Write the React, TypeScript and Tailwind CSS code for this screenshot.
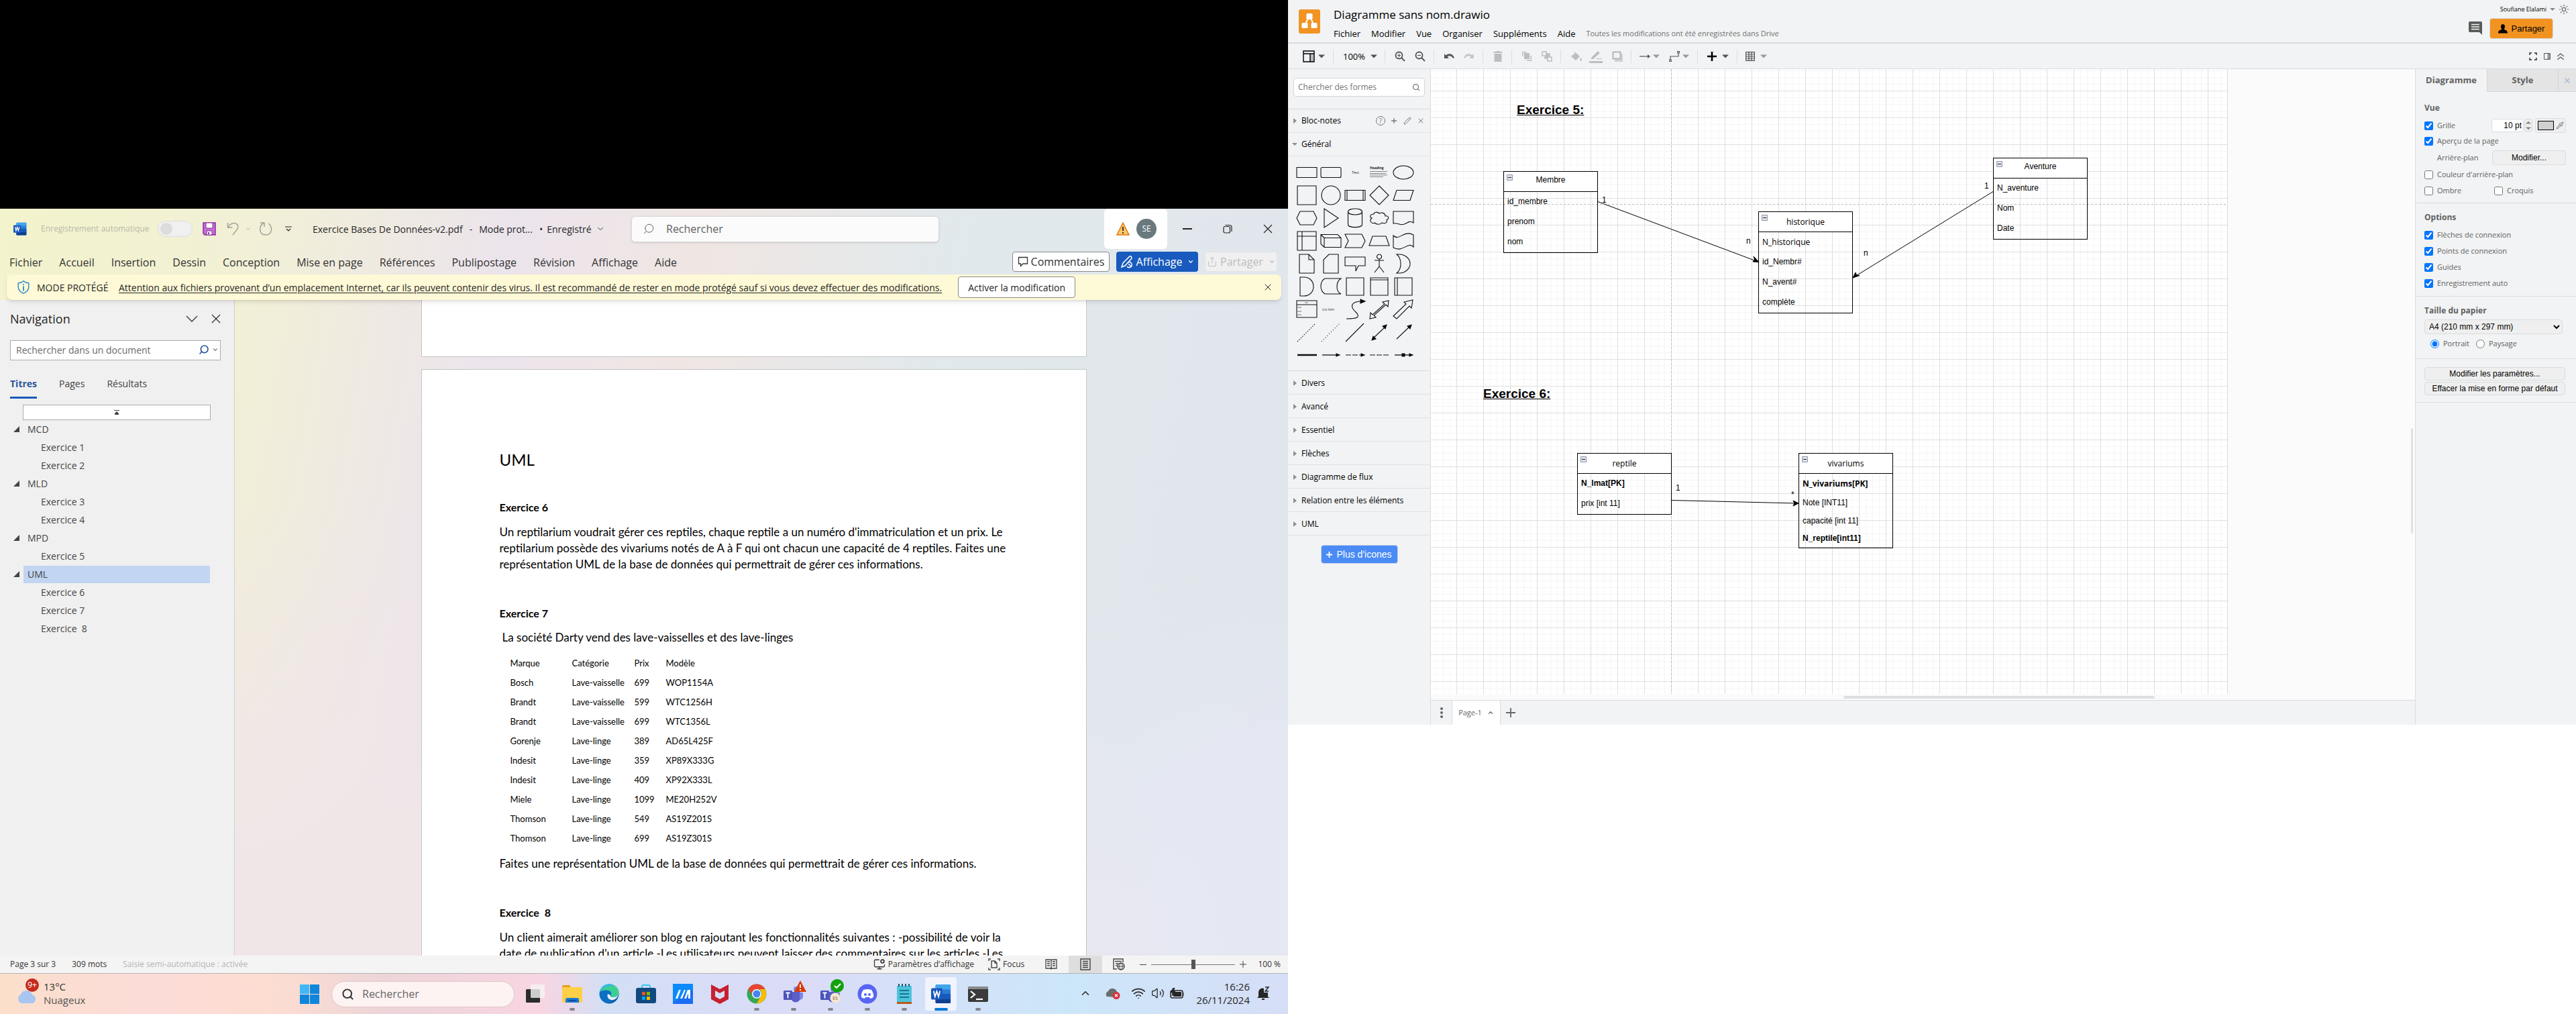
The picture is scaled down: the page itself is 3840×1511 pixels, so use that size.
import React from "react";
import type { ReactNode } from "react";
import {
  ChevronDown,
  ChevronUp,
  MonitorCog,
  Pencil,
  Pipette,
  Search,
  Share,
  Sun,
  Volume2,
  Wifi,
  X,
} from "lucide-react";

/* ------------------------------------------------------------------ */
/* Word                                                                */
/* ------------------------------------------------------------------ */

const wordTabs = [
  "Fichier",
  "Accueil",
  "Insertion",
  "Dessin",
  "Conception",
  "Mise en page",
  "Références",
  "Publipostage",
  "Révision",
  "Affichage",
  "Aide",
];

function WordLogo({ className }: { className: string }) {
  return (
    <svg viewBox="0 0 32 32" className={className} aria-hidden="true">
      <rect x="7" y="1" width="24" height="30" rx="2" fill="#2b7cd3" />
      <path d="M9 1h20a2 2 0 0 1 2 2v6H7V3a2 2 0 0 1 2-2z" fill="#41a5ee" />
      <path d="M7 16h24v8H7z" fill="#185abd" />
      <path d="M7 24h24v5a2 2 0 0 1-2 2H9a2 2 0 0 1-2-2z" fill="#103f91" />
      <rect x="0" y="7" width="18" height="18" rx="2" fill="#185abd" />
      <path d="M4 11.500l2.200 9 2.800-8.500 2.800 8.500 2.200-9" fill="none" stroke="#fff" strokeWidth="2" />
    </svg>
  );
}

function TitleBar() {
  return (
    <header className="flex h-[60px] shrink-0 items-center pl-5 text-[#262626]">
      <div className="flex flex-1 items-center">
        <WordLogo className="h-5 w-5" />
        <span className="ml-[21px] w-[174px] text-[12px] text-[#b9b9a8]">Enregistrement automatique</span>
        <button type="button" role="switch" aria-checked="false" aria-label="Enregistrement automatique" className="flex h-6 w-[52px] items-center rounded-full border border-[#dedede] bg-[#f0f0f0] pl-[3px]">
          <span className="h-[18px] w-[18px] rounded-full bg-[#dcdcdc]" />
        </button>
        <button type="button" aria-label="Enregistrer" className="ml-[15px]">
          <svg viewBox="0 0 20 20" className="h-5 w-5">
            <path d="M1 1h18v18H3l-2-2z" fill="#c56fd0" stroke="#8a2da5" strokeWidth="1.500" />
            <path d="M5 1h10v8H5z M6 13h8v6H6z" fill="#fff" stroke="#8a2da5" />
            <path d="M8 15h2v3H8z" fill="#8a2da5" />
          </svg>
        </button>
        <button type="button" aria-label="Annuler" className="ml-4">
          <svg viewBox="0 0 20 20" className="h-5 w-5" fill="none" stroke="#a3a299" strokeWidth="1.500">
            <path d="M1.500 1v7h7 M2 7.500C6 1 13 0 16 4c3 4-1 7-7 15" />
          </svg>
        </button>
        <ChevronDown className="ml-[7px] h-2.5 w-2.5 text-[#a3a299]" />
        <button type="button" aria-label="Rétablir" className="ml-[11px]">
          <svg viewBox="0 0 20 20" className="h-5 w-5" fill="none" stroke="#a3a299" strokeWidth="1.500">
            <path d="M2 1h6v6 M7 1.500C-1 6 0 19 10 19S21 7 14 2" />
          </svg>
        </button>
        <button type="button" aria-label="Personnaliser" className="ml-[19px]">
          <svg viewBox="0 0 10 10" className="h-2.5 w-2.5" fill="none" stroke="#262626" strokeWidth="1.200">
            <path d="M0 2h10 M2 5l3 3 3-3" />
          </svg>
        </button>
        <div className="ml-[31px] flex w-[434px] items-center gap-2.5 text-[14px] whitespace-nowrap">
          <span>Exercice Bases De Données-v2.pdf</span>
          <span>-</span>
          <span>Mode prot...</span>
          <span className="flex items-center gap-1.5">
            <span>•</span>
            <span>Enregistré</span>
            <ChevronDown className="h-3.5 w-3.5" strokeWidth={1.500} />
          </span>
        </div>
      </div>
      <label className="mr-[246px] ml-[19px] flex h-[39px] w-[459px] items-center gap-[17px] rounded-md border border-[#d8d8d8] bg-[#fbfbfb] pl-4 shadow-sm">
        <Search className="h-[18px] w-[18px] -scale-x-100 text-[#616161]" strokeWidth={1.300} />
        <input aria-label="Rechercher" placeholder="Rechercher" className="w-[380px] bg-transparent text-[16px] outline-none placeholder:text-[#616161]" />
      </label>
      <div className="flex h-[60px] w-[94px] items-center gap-2.5 rounded-md bg-white pl-[18px]">
        <svg viewBox="0 0 20 20" className="h-5 w-5">
          <path d="M10 1l9 18H1z" fill="#fbc765" stroke="#e2791c" strokeWidth="1.500" />
          <path d="M10 7v6M10 15v2" stroke="#262626" strokeWidth="1.800" />
        </svg>
        <span className="flex h-[30px] w-[30px] items-center justify-center rounded-full bg-[#69797e] text-[12px] text-white">SE</span>
      </div>
      <div className="flex items-center gap-[46px] pr-[23px] pl-[23px]">
        <button type="button" aria-label="Réduire" className="h-0.5 w-3.5 bg-[#262626]" />
        <button type="button" aria-label="Restaurer">
          <svg viewBox="0 0 14 14" className="h-3.5 w-3.5" fill="none" stroke="#262626" strokeWidth="1.200">
            <rect x="1" y="3.500" width="9.500" height="9.500" rx="2" />
            <path d="M3.500 1.500H10a3 3 0 0 1 3 3V11" />
          </svg>
        </button>
        <button type="button" aria-label="Fermer">
          <svg viewBox="0 0 14 14" className="h-3.5 w-3.5" stroke="#262626" strokeWidth="1.200">
            <path d="M1 1l12 12M13 1L1 13" />
          </svg>
        </button>
      </div>
    </header>
  );
}

function Ribbon() {
  return (
    <div className="flex h-[38px] shrink-0 items-center justify-between pr-4 pl-3.5 text-[16px] text-[#333]">
      <nav className="flex gap-[25px] pt-0.5">
        {wordTabs.map((tab) => (
          <button type="button" key={tab}>{tab}</button>
        ))}
      </nav>
      <div className="flex gap-2.5">
        <button type="button" className="flex h-[30px] w-[145px] items-center justify-center gap-1 rounded border border-[#8a8a8a] bg-white">
          <svg viewBox="0 0 16 16" className="h-4 w-4" fill="none" stroke="#333" strokeWidth="1.300">
            <path d="M1.500 1.500h13v9.500H8L4.500 14.500V11h-3z" />
          </svg>
          Commentaires
        </button>
        <button type="button" className="flex h-[30px] w-[122px] items-center justify-center gap-1 rounded bg-[#185abd] text-white">
          <svg viewBox="0 0 20 20" className="h-5 w-5" fill="none" stroke="#fff" strokeWidth="1.500">
            <path d="M2 18l2-6L14 2q3-1 3 3L7 16z M11 11a4 4 0 1 1-1 6M12 13l5 5" />
          </svg>
          Affichage
          <ChevronDown className="ml-1 h-2.5 w-2.5" strokeWidth={3} />
        </button>
        <button type="button" disabled className="flex h-[30px] w-[108px] items-center justify-center gap-1 rounded border border-[#e4e4e4] bg-[#f0f0f0] text-[#bdbdbd]">
          <Share className="h-4 w-4" strokeWidth={1.500} />
          Partager
          <ChevronDown className="ml-1 h-2.5 w-2.5" strokeWidth={3} />
        </button>
      </div>
    </div>
  );
}

function ProtectedBar() {
  return (
    <div className="z-10 mx-2.5 flex h-[38px] shrink-0 items-center rounded-lg bg-[#fef9d6] pl-[15px] text-[14px] text-[#262626] shadow-md">
      <svg viewBox="0 0 20 22" className="h-5 w-5" fill="none" stroke="#2e8bcb" strokeWidth="1.600">
        <path d="M10 1c3 2.500 5 3 8.500 3v7c0 5-4 8-8.500 10-4.500-2-8.500-5-8.500-10V4C5 4 7 3.500 10 1z" />
        <path d="M10 9v8M10 5.500v2" strokeWidth="2" />
      </svg>
      <span className="ml-2.5 w-[122px] whitespace-nowrap">MODE PROTÉGÉ</span>
      <a href="#infos" className="whitespace-nowrap underline underline-offset-2">
        Attention aux fichiers provenant d’un emplacement Internet, car ils peuvent contenir des virus. Il est recommandé de rester en mode protégé sauf si vous devez effectuer des modifications.
      </a>
      <button type="button" className="ml-6 h-8 w-[175px] rounded border border-[#8a8a8a] bg-white">Activer la modification</button>
      <button type="button" aria-label="Fermer" className="mr-3 ml-auto">
        <X className="h-4 w-4" strokeWidth={1.500} />
      </button>
    </div>
  );
}

const outline = [
  { title: "MCD", items: ["Exercice 1", "Exercice 2"] },
  { title: "MLD", items: ["Exercice 3", "Exercice 4"] },
  { title: "MPD", items: ["Exercice 5"] },
  { title: "UML", items: ["Exercice 6", "Exercice 7", "Exercice  8"], active: true },
];

function NavigationPane() {
  return (
    <aside className="w-[350px] shrink-0 border-r border-[#d0d0d0] bg-[#f0f0f0] text-[14px] text-[#444]">
      <div className="flex h-14 items-center pr-5 pl-[15px]">
        <h2 className="flex-1 text-[18px] text-[#262626]">Navigation</h2>
        <button type="button" aria-label="Options du volet" className="mr-5">
          <svg viewBox="0 0 18 10" className="h-2.5 w-[18px]" fill="none" stroke="#333" strokeWidth="1.300"><path d="M1 1l8 8 8-8" /></svg>
        </button>
        <button type="button" aria-label="Fermer le volet">
          <svg viewBox="0 0 14 14" className="h-3.5 w-3.5" stroke="#333" strokeWidth="1.300"><path d="M1 1l12 12M13 1L1 13" /></svg>
        </button>
      </div>
      <div className="mt-1 mr-5 ml-[15px] flex h-[30px] items-center border border-[#ababab] bg-white pr-0.5 pb-0.5 pl-2">
        <input aria-label="Rechercher dans un document" placeholder="Rechercher dans un document" className="min-w-0 flex-1 outline-none placeholder:text-[#6a6a6a]" />
        <Search className="h-4 w-4 -scale-x-100 text-[#2b579a]" strokeWidth={2.500} />
        <ChevronDown className="ml-1 h-2.5 w-2.5" strokeWidth={2.500} />
      </div>
      <div className="mt-[19px] flex h-[38px] items-stretch gap-[33px] pl-[15px]">
        <button type="button" className="border-b-[3px] border-[#185abd] pb-1 font-bold text-[#2b579a]">Titres</button>
        <button type="button" className="border-b-[3px] border-transparent pb-1">Pages</button>
        <button type="button" className="border-b-[3px] border-transparent pb-1">Résultats</button>
      </div>
      <button type="button" aria-label="Aller au début" className="mt-[9px] ml-[34px] flex h-[23px] w-[280px] items-center justify-center border border-[#ababab] bg-white">
        <svg viewBox="0 0 8 7" className="h-[7px] w-2" fill="#444"><path d="M0 0h8v1H0z M4 2l3 3v2H1V5z" /></svg>
      </button>
      <ul className="mr-9 pl-5">
        {outline.map((group) => (
          <li key={group.title}>
            <div className="flex h-[27px] items-center gap-1.5">
              <svg viewBox="0 0 9 9" className="h-[9px] w-[9px]" fill="#444"><path d="M9 0v9H0z" /></svg>
              <span className={group.active ? "flex h-[26px] flex-1 items-center bg-[#c2d5f2] pl-1.5" : "flex-1 pl-1.5"}>{group.title}</span>
            </div>
            <ul>
              {group.items.map((item) => (
                <li key={item} className="flex h-[27px] items-center pl-[41px] whitespace-pre">{item}</li>
              ))}
            </ul>
          </li>
        ))}
      </ul>
    </aside>
  );
}

const machines = [
  ["Bosch", "Lave-vaisselle", "699", "WOP1154A"],
  ["Brandt", "Lave-vaisselle", "599", "WTC1256H"],
  ["Brandt", "Lave-vaisselle", "699", "WTC1356L"],
  ["Gorenje", "Lave-linge", "389", "AD65L425F"],
  ["Indesit", "Lave-linge", "359", "XP89X333G"],
  ["Indesit", "Lave-linge", "409", "XP92X333L"],
  ["Miele", "Lave-linge", "1099", "ME20H252V"],
  ["Thomson", "Lave-linge", "549", "AS19Z201S"],
  ["Thomson", "Lave-linge", "699", "AS19Z301S"],
];

function DocumentPages() {
  return (
    <main className="flex min-w-0 flex-1 flex-col items-center overflow-hidden bg-[radial-gradient(ellipse_80%_75%_at_15%_105%,#f0e6e8_30%,transparent_100%),radial-gradient(ellipse_40%_60%_at_100%_100%,#e5e8f3_30%,transparent_100%)] pr-[23px]">
      <div className="h-[85px] w-[992px] shrink-0 border border-t-0 border-[#c6c6c6] bg-white" />
      <article className="mt-[18px] w-[992px] shrink-0 border border-[#c6c6c6] bg-white px-[116px] pb-24 font-[Lato,sans-serif] text-[17px] leading-6 whitespace-nowrap text-black">
        <h1 className="mt-[116px] text-[24px] leading-9">UML</h1>
        <h2 className="mt-[41px] text-[16px] leading-6 font-bold">Exercice 6</h2>
        <p className="mt-[13px]">
          Un reptilarium voudrait gérer ces reptiles, chaque reptile a un numéro d'immatriculation et un prix. Le
          <br />
          reptilarium possède des vivariums notés de A à F qui ont chacun une capacité de 4 reptiles. Faites une
          <br />
          représentation UML de la base de données qui permettrait de gérer ces informations.
        </p>
        <h2 className="mt-[49px] text-[16px] leading-6 font-bold">Exercice 7</h2>
        <p className="mt-3 pl-1">La société Darty vend des lave-vaisselles et des lave-linges</p>
        <table className="mt-[11px] ml-4 text-left text-[13px]">
          <thead>
            <tr className="h-[29px]">
              <th className="w-[92px] font-normal">Marque</th>
              <th className="w-[93px] font-normal">Catégorie</th>
              <th className="w-[47px] font-normal">Prix</th>
              <th className="w-[90px] font-normal">Modèle</th>
            </tr>
          </thead>
          <tbody>
            {machines.map((row) => (
              <tr key={row[3]} className="h-[29px]">
                {row.map((cell) => (
                  <td key={cell}>{cell}</td>
                ))}
              </tr>
            ))}
          </tbody>
        </table>
        <p className="mt-3">Faites une représentation UML de la base de données qui permettrait de gérer ces informations.</p>
        <h2 className="mt-[49px] text-[16px] leading-6 font-bold whitespace-pre">Exercice  8</h2>
        <p className="mt-[13px]">
          Un client aimerait améliorer son blog en rajoutant les fonctionnalités suivantes : -possibilité de voir la
          <br />
          date de publication d'un article -Les utilisateurs peuvent laisser des commentaires sur les articles -Les
        </p>
      </article>
    </main>
  );
}

function StatusBar() {
  return (
    <footer className="flex h-[27px] shrink-0 items-center border-b border-[#b4b4b4] bg-[#f4f4f4] pr-[11px] pl-[15px] text-[12px] text-[#333]">
      <span>Page 3 sur 3</span>
      <span className="ml-6">309 mots</span>
      <span className="ml-6 text-[#b5b5b5]">Saisie semi-automatique : activée</span>
      <button type="button" className="mr-[21px] ml-auto flex items-center gap-1"><MonitorCog className="h-[18px] w-[18px]" strokeWidth={1.700} />Paramètres d’affichage</button>
      <button type="button" className="flex w-[85px] items-center gap-1">
        <svg viewBox="0 0 18 18" className="h-[18px] w-[18px]" fill="none" stroke="#444" strokeWidth="1.400">
          <path d="M1 4V1h3M14 1h3v3M17 14v3h-3M4 17H1v-3 M5 4h5l3 3v7H5z M10 4v3h3" />
        </svg>
        Focus
      </button>
      <button type="button" aria-label="Mode Lecture" className="mr-[17px]">
        <svg viewBox="0 0 18 18" className="h-[18px] w-[18px]" fill="none" stroke="#444" strokeWidth="1.300">
          <path d="M1 2h7l1 1 1-1h7v13h-7l-1 1-1-1H1z M9 3v13M3 5h4M3 8h4M3 11h4M11 5h4M11 8h4M11 11h4" />
        </svg>
      </button>
      <button type="button" aria-label="Page" className="flex h-[26px] w-[50px] items-center justify-center bg-[#dedede]">
        <svg viewBox="0 0 16 18" className="h-[18px] w-4" fill="none" stroke="#444" strokeWidth="1.400">
          <path d="M1 1h14v16H1z M4 4.500h8M4 7.500h8M4 10.500h8M4 13.500h8" />
        </svg>
      </button>
      <button type="button" aria-label="Web" className="mr-[22px] ml-4">
        <svg viewBox="0 0 18 18" className="h-[18px] w-[18px]" fill="none" stroke="#444" strokeWidth="1.400">
          <path d="M6 16H1V1h14v5M3 4.500h10M4 8h4M4 11h2" />
          <circle cx="12" cy="12" r="5" />
          <path d="M7 12h10M12 7c-3 3-3 7 0 10M12 7c3 3 3 7 0 10" strokeWidth="1" />
        </svg>
      </button>
      <button type="button" aria-label="Zoom arrière" className="h-px w-2.5 bg-[#444]" />
      <div className="relative mx-[7px] h-4 w-[125px]">
        <span className="absolute top-2 left-0 h-px w-full bg-[#777]" />
        <input type="range" aria-label="Zoom" defaultValue={50} className="absolute inset-0 h-4 w-full cursor-pointer appearance-none bg-transparent [&::-webkit-slider-thumb]:h-3.5 [&::-webkit-slider-thumb]:w-1.5 [&::-webkit-slider-thumb]:appearance-none [&::-webkit-slider-thumb]:bg-[#555]" />
      </div>
      <button type="button" aria-label="Zoom avant"><svg viewBox="0 0 10 10" className="h-2.5 w-2.5" stroke="#444"><path d="M0 5h10M5 0v10" /></svg></button>
      <span className="w-[51px] text-right whitespace-nowrap">100 %</span>
    </footer>
  );
}

/* ------------------------------------------------------------------ */
/* Windows task bar                                                    */
/* ------------------------------------------------------------------ */

function TeamsGlyph() {
  return (
    <>
      <circle cx="19" cy="8" r="4" fill="#7b83eb" />
      <path d="M12 12h13v9a7 7 0 0 1-13 3z" fill="#5b5fc7" />
      <path d="M24 13h5v6a5 5 0 0 1-5 5z" fill="#7b83eb" />
      <rect x="0" y="10" width="13" height="14" rx="1.500" fill="#4b53bc" />
      <path d="M3.500 13.500h6M6.500 13.500v8" stroke="#fff" strokeWidth="1.800" />
    </>
  );
}

const taskIcons: { name: string; open: boolean; active?: boolean; art: ReactNode }[] = [
  {
    name: "Vue des tâches",
    open: false,
    art: (
      <>
        <rect x="1" y="8" width="21" height="20" rx="1.500" fill="#2b2b2b" />
        <rect x="8" y="1" width="21" height="20" rx="1.500" fill="#f5f5f5" fillOpacity=".8" />
      </>
    ),
  },
  {
    name: "Explorateur",
    open: true,
    art: (
      <>
        <path d="M0 4a2 2 0 0 1 2-2h9l3 4v3H0z" fill="#e8a21a" />
        <rect x="0" y="5" width="30" height="23" rx="1.500" fill="#ffcf48" />
        <path d="M5 28v-4a3 3 0 0 1 3-3h14a3 3 0 0 1 3 3v4z" fill="#1a78d0" />
        <path d="M9 25h12" stroke="#0a3f80" strokeWidth="1.500" />
      </>
    ),
  },
  {
    name: "Edge",
    open: false,
    art: (
      <>
        <circle cx="15" cy="15" r="14.500" fill="#0c6fc4" />
        <path d="M1 12C3 4 9 .5 15 .5 24 .5 30 7 29.500 13c0 5-4 7-8 7-3 0-5-1-4-3 2-3 0-7-4-7-5-1-9 0-12.500 2z" fill="#3ccf8f" />
        <path d="M1 12C3 4 9 .5 15 .5c3 0 6 1 8 3-8-2-16 1-22 8.500z" fill="#35b8e8" />
        <path d="M17 17c-1 2 1 3 4 3 3 0 6-1 7-3 0 3-3 6-7 7-6 1-10-4-8-9z" fill="#e6eefb" />
        <path d="M28 20c-3 6-9 10-15 9 5-1 7-2 9-4z" fill="#0b4f97" />
      </>
    ),
  },
  {
    name: "Store",
    open: false,
    art: (
      <>
        <path d="M9 7V4a2 2 0 0 1 2-2h8a2 2 0 0 1 2 2v3" fill="none" stroke="#3bc4f3" strokeWidth="2" />
        <rect x="0" y="6" width="30" height="23" rx="3" fill="#12497f" />
        <path d="M9 12h5v5H9z" fill="#f25022" />
        <path d="M16 12h5v5h-5z" fill="#7fba00" />
        <path d="M9 19h5v5H9z" fill="#00a4ef" />
        <path d="M16 19h5v5h-5z" fill="#ffb900" />
      </>
    ),
  },
  {
    name: "MyASUS",
    open: false,
    art: (
      <>
        <rect x="0" y="0" width="30" height="30" fill="#1a6ef5" />
        <path d="M0 0h30v8L0 28z" fill="#00a5ff" opacity=".5" />
        <path d="M4 22l5-13h3L7 22z M11 22l6-13h2l-5 13z M17 22l5-13h4v13h-3V14l-3 8z" fill="#fff" />
      </>
    ),
  },
  {
    name: "McAfee",
    open: false,
    art: <path d="M2 1l13 7 13-7v22l-13 7-13-7z M8 10v9l7 4 7-4v-9l-7 4z" fill="#c7202f" fillRule="evenodd" />,
  },
  {
    name: "Chrome",
    open: true,
    art: (
      <>
        <circle cx="15" cy="15" r="14.500" fill="#34a853" />
        <path d="M15 .5A14.500 14.500 0 0 1 27.600 8H15a7 7 0 0 0-6.500 9.500L2.500 7.500A14.500 14.500 0 0 1 15 .5z" fill="#ea4335" />
        <path d="M27.600 8A14.500 14.500 0 0 1 15 29.500l6-11A7 7 0 0 0 19 8z" fill="#fbbc05" />
        <circle cx="15" cy="15" r="7" fill="#fff" />
        <circle cx="15" cy="15" r="5.500" fill="#4285f4" />
      </>
    ),
  },
  {
    name: "Teams",
    open: true,
    art: (
      <>
        <TeamsGlyph />
        <path d="M25-5l9 17H16z" fill="#d83b01" />
        <path d="M25 1v5M25 8v2" stroke="#fff" strokeWidth="2" />
      </>
    ),
  },
  {
    name: "Teams professionnel",
    open: true,
    art: (
      <>
        <TeamsGlyph />
        <circle cx="25" cy="3" r="10" fill="#13a10e" />
        <path d="M21 3l3 3 6-6" fill="none" stroke="#fff" strokeWidth="2" />
        <circle cx="22" cy="21" r="7.500" fill="#f6e8cf" />
        <text x="22" y="23.500" fontSize="7" textAnchor="middle" fill="#6b5a3a">ES</text>
      </>
    ),
  },
  {
    name: "Discord",
    open: true,
    art: (
      <>
        <circle cx="15" cy="15" r="14.500" fill="#5865f2" />
        <path d="M9 9q6-2 12 0 4 6 3 11-3 2-5 2l-1-2h-6l-1 2q-2 0-5-2-1-5 3-11z" fill="#fff" />
        <circle cx="12" cy="16" r="2" fill="#5865f2" />
        <circle cx="18" cy="16" r="2" fill="#5865f2" />
      </>
    ),
  },
  {
    name: "Bloc-notes",
    open: true,
    art: (
      <>
        <rect x="4" y="3" width="22" height="24" rx="1" fill="#4cc3dc" />
        <path d="M4 27h22v3H4z" fill="#b65a1c" />
        <path d="M8 10h14M8 15h14M8 20h14" stroke="#0b5a78" strokeWidth="1.500" />
        <path d="M7 0v4M12 0v4M17 0v4M22 0v4" stroke="#12566d" strokeWidth="2" />
      </>
    ),
  },
  { name: "Word", open: true, active: true, art: null },
  {
    name: "Terminal",
    open: true,
    art: (
      <>
        <rect x="0" y="4" width="30" height="23" rx="2" fill="#3a3a3a" />
        <path d="M0 8V6a2 2 0 0 1 2-2h26a2 2 0 0 1 2 2v2z" fill="#8a8a8a" />
        <path d="M4 11l6 5-6 5" fill="none" stroke="#fff" strokeWidth="2.200" />
        <path d="M12 23h10" stroke="#fff" strokeWidth="2.200" />
      </>
    ),
  },
];

function TaskBar() {
  return (
    <footer className="flex h-[60px] shrink-0 items-center bg-[linear-gradient(90deg,#fbdfcb_0%,#fcdcd8_11%,#fdddd1_21%,#ecd5d8_30%,#f8d5e2_42%,#d3dff5_47%,#dbdcf7_62%,#cce6f9_83%,#d6def6_100%)] text-[15px] text-[#333]">
      <div className="relative flex w-[447px] items-center pb-0.5 pl-[25px]">
        <svg viewBox="0 0 34 34" className="h-[34px] w-[34px]">
          <path d="M7 32a7 7 0 0 1-1-13 9 9 0 0 1 17 0 7 7 0 0 1 1 13z" fill="#a9c5f2" />
        </svg>
        <span className="absolute -top-0.5 left-[38px] flex h-5 w-5 items-center justify-center rounded-full bg-[#c42b1c] text-[12px] text-white">9+</span>
        <div className="ml-1.5 leading-5">
          <div>13°C</div>
          <div className="text-[#555]">Nuageux</div>
        </div>
      </div>
      <button type="button" aria-label="Démarrer">
        <svg viewBox="0 0 29 29" className="h-[29px] w-[29px]" fill="#0f86dc">
          <path d="M0 0h14v14H0z" fill="#3fb8f5" />
          <path d="M15 0h14v14H15z M0 15h14v14H0z M15 15h14v14H15z" />
        </svg>
      </button>
      <label className="ml-[18px] flex h-[39px] w-[273px] items-center gap-3 rounded-full border border-[#e2c4c6] bg-[#fdf3f3] pl-3.5">
        <Search className="h-[19px] w-[19px] text-[#333]" strokeWidth={2.500} />
        <input aria-label="Recherche Windows" placeholder="Rechercher" className="w-[200px] bg-transparent text-[16px] outline-none placeholder:text-[#666]" />
      </label>
      <div className="ml-[3px] flex">
        {taskIcons.map((icon) => (
          <button
            type="button"
            key={icon.name}
            aria-label={icon.name}
            className={icon.active ? "relative mx-1 flex h-[50px] w-[47px] items-center justify-center rounded bg-[#f1f3fd]" : "relative flex h-[50px] w-[55px] items-center justify-center"}
          >
            {icon.active ? (
              <WordLogo className="h-[30px] w-[30px]" />
            ) : (
              <svg viewBox="0 0 30 30" className="h-[30px] w-[30px] overflow-visible">{icon.art}</svg>
            )}
            {icon.open && (
              <span className={icon.active ? "absolute bottom-0 h-1 w-5 rounded-full bg-[#0f78d4]" : "absolute bottom-0 h-1 w-2 rounded-full bg-[#84848c]"} />
            )}
          </button>
        ))}
      </div>
      <div className="mr-[27px] ml-auto flex items-center pb-0.5 text-[#262626]">
        <ChevronUp className="h-[18px] w-[18px]" />
        <svg viewBox="0 0 22 18" className="ml-[21px] h-[18px] w-[22px]">
          <path d="M2 14a5 5 0 0 1 2-8 7 7 0 0 1 13 1q3 6-2 8z" fill="#6d6d6d" />
          <circle cx="16" cy="12.500" r="5.500" fill="#d9303a" />
          <path d="M14 10.500l4 4m0-4l-4 4" stroke="#fff" strokeWidth="1.300" />
        </svg>
        <Wifi className="ml-4 h-[22px] w-[22px]" strokeWidth={1.800} />
        <Volume2 className="ml-2 h-5 w-5" strokeWidth={1.500} />
        <svg viewBox="0 0 22 16" className="ml-2 h-4 w-[22px]">
          <rect x="1" y="4" width="18" height="11" rx="2.500" fill="none" stroke="#262626" strokeWidth="1.500" />
          <rect x="5" y="6" width="12" height="7" fill="#262626" />
          <path d="M20 7v5M5 0L1 7h3l-1 5 5-7H5l2-5z" stroke="#262626" fill="#262626" />
        </svg>
        <div className="w-[97px] text-right leading-5">
          <div>16:26</div>
          <div>26/11/2024</div>
        </div>
        <svg viewBox="0 0 20 20" className="ml-2.5 h-5 w-5">
          <path d="M3 15V8a6 6 0 0 1 8-5v6h6v6l2 2H1z M8 18h4v2H8z" fill="#262626" />
          <path d="M13 1h5l-5 6h5" stroke="#262626" strokeWidth="1.500" fill="none" />
        </svg>
      </div>
    </footer>
  );
}

/* ------------------------------------------------------------------ */
/* draw.io                                                             */
/* ------------------------------------------------------------------ */

const drawMenus = ["Fichier", "Modifier", "Vue", "Organiser", "Suppléments", "Aide"];

function Caret({ className }: { className: string }) {
  return (
    <svg viewBox="0 0 10 5" className={className} fill="currentColor" aria-hidden="true">
      <path d="M0 0h10L5 5z" />
    </svg>
  );
}

function Separator({ className }: { className: string }) {
  return <span className={className} />;
}

function DrawHeader() {
  return (
    <header className="flex h-[65px] shrink-0 items-center border-b-2 border-[#dadce0] pr-2.5 pl-4">
      <svg viewBox="0 0 32 36" className="h-9 w-8">
        <rect width="32" height="36" rx="3" fill="#f29424" />
        <path d="M16 9L9 24M16 9l7 15" stroke="#fff" strokeWidth="2" />
        <rect x="11.500" y="6" width="9" height="9" rx="1.500" fill="#fff" />
        <rect x="4.500" y="20" width="9" height="8" rx="1.500" fill="#fff" />
        <rect x="18.500" y="20" width="9" height="8" rx="1.500" fill="#fff" />
      </svg>
      <div className="ml-5 flex-1 pt-1">
        <h1 className="text-[17px] leading-7 text-black">Diagramme sans nom.drawio</h1>
        <div className="mt-1 flex items-center gap-4 text-[13px] leading-5 text-black">
          {drawMenus.map((menu) => (
            <button type="button" key={menu}>{menu}</button>
          ))}
          <span className="text-[11px] text-[#6f6f6f]">Toutes les modifications ont été enregistrées dans Drive</span>
        </div>
      </div>
      <svg viewBox="0 0 20 20" className="mt-5 mr-[11px] h-5 w-5">
        <path d="M2 0h16a2 2 0 0 1 2 2v18l-4-4H2a2 2 0 0 1-2-2V2a2 2 0 0 1 2-2z" fill="#5a5a5a" />
        <path d="M4 4.500h12M4 8h12M4 11.500h12" stroke="#f1f3f4" strokeWidth="1.500" />
      </svg>
      <div className="flex flex-col">
        <div className="flex h-[18px] items-center justify-end text-[9px] text-black">
          <span>Soufiane Elalami</span>
          <Caret className="mx-[5px] h-1 w-2 text-[#8a8a8a]" />
          <Sun className="h-4 w-4 text-[#6a6a6a]" strokeWidth={1.800} />
        </div>
        <button type="button" className="mt-1 mr-6 flex h-[31px] w-[95px] items-center justify-center gap-1.5 rounded-sm border border-[#d8dade] bg-[#f29321] font-['Liberation_Sans',sans-serif] text-[13px] text-black">
          <svg viewBox="0 0 14 14" className="h-3.5 w-3.5"><path d="M7 0a3.500 3.500 0 0 1 2.500 5.500L9 8c3 1 5 2 5 5.500H0C0 10 2 9 5 8l-.5-2.500A3.500 3.500 0 0 1 7 0z" /></svg>
          Partager
        </button>
      </div>
    </header>
  );
}

function DrawToolbar() {
  return (
    <div className="flex h-[38px] shrink-0 items-center border-b border-[#dadce0] pr-[18px] pl-[22px] text-[#555]">
      <button type="button" aria-label="Affichage" className="flex items-center gap-[5px]">
        <svg viewBox="0 0 18 18" className="h-[18px] w-[18px]">
          <path d="M11 5h6v12h-6z" fill="#bbb" />
          <path d="M1 1h16v16H1z M1 5h16 M11 5v12" fill="none" stroke="#000" strokeWidth="1.400" />
        </svg>
        <Caret className="h-1.5 w-2.5" />
      </button>
      <Separator className="mx-3 h-5 w-px bg-[#dadce0]" />
      <button type="button" className="ml-0.5 flex items-center gap-2 pt-0.5 text-[13px] text-black">
        <span>100%</span>
        <Caret className="mb-0.5 h-1.5 w-2.5 text-[#555]" />
      </button>
      <Separator className="mr-[14px] ml-[11px] h-5 w-px bg-[#dadce0]" />
      <button type="button" aria-label="Zoom avant">
        <svg viewBox="0 0 16 16" className="h-4 w-4" fill="none" stroke="#555" strokeWidth="1.800">
          <circle cx="6.500" cy="6.500" r="5" /><path d="M10 10l5 5" /><path d="M4 6.500h5M6.500 4v5" strokeWidth="1.200" />
        </svg>
      </button>
      <button type="button" aria-label="Zoom arrière" className="ml-3.5">
        <svg viewBox="0 0 16 16" className="h-4 w-4" fill="none" stroke="#555" strokeWidth="1.800">
          <circle cx="6.500" cy="6.500" r="5" /><path d="M10 10l5 5" /><path d="M4 6.500h5" strokeWidth="1.200" />
        </svg>
      </button>
      <Separator className="mx-3 h-5 w-px bg-[#dadce0]" />
      <button type="button" aria-label="Annuler" className="ml-0.5">
        <svg viewBox="0 0 16 12" className="h-3 w-4" fill="#555"><path d="M1 2v7h7L5.500 6.500C8 4.500 12 5 14 9l2-1C13 1 7 1 3.500 4.500z" /></svg>
      </button>
      <button type="button" aria-label="Rétablir" className="ml-3.5">
        <svg viewBox="0 0 16 12" className="h-3 w-4 -scale-x-100" fill="#c4c6c8"><path d="M1 2v7h7L5.500 6.500C8 4.500 12 5 14 9l2-1C13 1 7 1 3.500 4.500z" /></svg>
      </button>
      <Separator className="mr-3.5 ml-3 h-5 w-px bg-[#dadce0]" />
      <button type="button" aria-label="Supprimer">
        <svg viewBox="0 0 16 16" className="h-4 w-4" fill="#bcbec0"><path d="M1.500 1H5l1-1h4l1 1h3.500v2h-13z M2.500 4h11v12h-11z" /></svg>
      </button>
      <Separator className="mr-3 ml-3 h-5 w-px bg-[#dadce0]" />
      <button type="button" aria-label="Mettre devant" className="ml-0.5">
        <svg viewBox="0 0 16 16" className="h-4 w-4" fill="#bcbec0"><path d="M4 3h8v9H4z M1 1h6v1.500H2.500V8H1z M14 7h1v8H8v-1.500h5.500V7z" /></svg>
      </button>
      <button type="button" aria-label="Mettre derrière" className="ml-3.5">
        <svg viewBox="0 0 16 16" className="h-4 w-4" fill="none" stroke="#bcbec0" strokeWidth="1.500"><path d="M5 4h7v7H5z" fill="#bcbec0" /><path d="M1 1h6v6H1z M9 9h6v6H9z" fill="#f1f3f4" /></svg>
      </button>
      <Separator className="mr-3.5 ml-3 h-5 w-px bg-[#dadce0]" />
      <button type="button" aria-label="Remplissage">
        <svg viewBox="0 0 18 18" className="h-[18px] w-[18px]" fill="#bcbec0"><path d="M5 1l9 8-6 6-7-6 6-5zM15.500 11q3 4 0 5-3-1 0-5z" /></svg>
      </button>
      <button type="button" aria-label="Trait" className="ml-2.5">
        <svg viewBox="0 0 20 20" className="h-5 w-5" fill="#bcbec0"><path d="M3 12L13 2l3 3L6 14H3z M0 17h20v3H0z M11 13h8v1h-8z" /></svg>
      </button>
      <button type="button" aria-label="Ombre" className="ml-3.5">
        <svg viewBox="0 0 16 16" className="h-4 w-4"><path d="M4 4h12v12H4z" fill="#d0d2d4" /><path d="M1.500 1.500h11v10h-11z" fill="#f1f3f4" stroke="#b4b6b8" strokeWidth="2" /></svg>
      </button>
      <Separator className="mr-3 ml-3 h-5 w-px bg-[#dadce0]" />
      <button type="button" aria-label="Connexion" className="flex items-center gap-1">
        <svg viewBox="0 0 16 10" className="h-2.5 w-4" stroke="#555" fill="#555"><path d="M0 5h14" strokeWidth="1.200" /><path d="M12 2l4 3-4 3z" stroke="none" /></svg>
        <Caret className="h-1.5 w-2.5 text-[#999]" />
      </button>
      <button type="button" aria-label="Points de passage" className="ml-3.5 flex items-center gap-1">
        <svg viewBox="0 0 16 16" className="h-4 w-4" fill="none" stroke="#555" strokeWidth="1.200"><path d="M2 13V8h12V3" /><path d="M.700 13h2.600v2.500H.700z M12.700.500h2.600V3h-2.600z" /></svg>
        <Caret className="h-1.5 w-2.5 text-[#999]" />
      </button>
      <Separator className="mr-3.5 ml-3 h-5 w-px bg-[#dadce0]" />
      <button type="button" aria-label="Insérer" className="flex items-center gap-2">
        <svg viewBox="0 0 14 14" className="h-3.5 w-3.5" stroke="#000" strokeWidth="2.600"><path d="M7 0v14M0 7h14" /></svg>
        <Caret className="h-1.5 w-2.5" />
      </button>
      <Separator className="mr-3 ml-3 h-5 w-px bg-[#dadce0]" />
      <button type="button" aria-label="Tableau" className="flex items-center gap-2">
        <svg viewBox="0 0 14 14" className="h-3.5 w-3.5" fill="none" stroke="#555" strokeWidth="1.200"><path d="M.600.600h12.800v12.800H.600z M5 .600v12.800M9 .600v12.800M.600 4h12.800M.600 7h12.800M.600 10h12.800" /></svg>
        <Caret className="h-1.5 w-2.5 text-[#999]" />
      </button>
      <div className="ml-auto flex items-center gap-2.5">
        <button type="button" aria-label="Plein écran"><svg viewBox="0 0 12 12" className="h-3 w-3" fill="none" stroke="#555" strokeWidth="1.800"><path d="M1 4V1h3M8 1h3v3M11 8v3H8M4 11H1V8" /></svg></button>
        <button type="button" aria-label="Format"><svg viewBox="0 0 10 10" className="h-2.5 w-2.5"><path d="M.6.6h8.800v8.800H.6z" fill="none" stroke="#555" /><path d="M6 1h3v8H6z" fill="#aaa" stroke="#555" strokeWidth=".6" /></svg></button>
        <button type="button" aria-label="Réduire"><svg viewBox="0 0 10 10" className="h-2.5 w-2.5" fill="none" stroke="#555" strokeWidth="1.300"><path d="M0 5l5-4 5 4M0 10l5-4 5 4" /></svg></button>
      </div>
    </div>
  );
}

const paletteShapes: ReactNode[] = [
  <path d="M3 9.500h30v15H3z" />,
  <rect x="3" y="9.500" width="30" height="15" rx="2" />,
  <text x="13" y="19" fontSize="5.500" fill="#222" stroke="none">Text</text>,
  <g stroke="none" fill="#222"><text x="4" y="12" fontSize="5" fontWeight="bold">Heading</text><path d="M4 15h26v.7H4z M4 18h24v.7H4z M4 20.500h26v.7H4z M4 23h20v.7H4z" opacity=".7" /></g>,
  <ellipse cx="18" cy="17" rx="15" ry="10" />,
  <path d="M4 3h28v28H4z" />,
  <circle cx="18" cy="17" r="14" />,
  <path d="M3 9.500h30v15H3z M6 9.500v15M30 9.500v15" />,
  <path d="M18 3l14 14-14 14L4 17z" />,
  <path d="M8 9.500h25l-5 15H3z" />,
  <path d="M8 7h20l5 10-5 10H8L3 17z" />,
  <path d="M8 3l21 14L8 31z" />,
  <path d="M7.500 7.500v19c0 5.500 21 5.500 21 0v-19c0-6-21-6-21 0s21 6 21 0" />,
  <path d="M10 11c-6 0-7 5-3 6-5 4 0 9 4 7 3 3 9 3 11 0 5 2 9-1 7-4 5-3 2-7-2-6 0-5-6-6-9-4-3-3-8-2-8 1z" />,
  <path d="M3 7h30v17c-8-6-12 6-21 2-4-1-6-2-9-1z" />,
  <path d="M4 3h28v28H4z M11 3v28M4 10h28" />,
  <path d="M3 7.500h25l5 5v14H8l-5-5z M8 26.500v-14h25M3 7.500l5 5" />,
  <path d="M3 7h25l5 10-5 10H3l5-10z" />,
  <path d="M8 10h20l5 14H3z" />,
  <path d="M3 9c9 9 15-9 30-1v18c-9-9-15 9-30 1z" />,
  <path d="M7 3h14l8 8v20H7z M21 3v8h8" />,
  <path d="M15 3h14v28H7V11z" />,
  <path d="M3 7h30v13H23l-4 8v-8H3z" />,
  <path d="M18 10v11l-7 9M18 21l7 9M11 12h14M18 3a3.500 3.500 0 1 0 .1 0" />,
  <path d="M8 3h4c8 0 16 6 16 14s-8 14-16 14H8c8-6 8-22 0-28z" />,
  <path d="M8 3h6c8 0 14 6 14 14s-6 14-14 14H8z" />,
  <path d="M9 5h24c-8 5-8 19 0 23H9C1 23 1 10 9 5z" />,
  <path d="M5 4h26v26H5z" />,
  <path d="M5 4h26v26H5z M5 7h26" />,
  <path d="M5 4h26v26H5z M9 4v26" />,
  <g><path d="M3 4h30v25H3z M3 10h30" /><path d="M15 7h5M4 14h6M4 20h6M4 25h6" strokeWidth=".8" stroke="#555" /></g>,
  <text x="5" y="19" fontSize="4.500" fill="#333" stroke="none">List Item</text>,
  <g><path d="M5 31c16 0 22-2 14-10-9-8-8-16 10-16" /><path d="M26 2l7 3-7 3z" fill="#000" /></g>,
  <path d="M4 31l1-9 3 3L26 9l-3-3 9-2-1 9-3-3L10 26l3 3z" />,
  <path d="M3 27L22 9l-3-3 13-3-2 12-3-3L8 31z" />,
  <path d="M4 31L31 4" strokeDasharray="1.500 2" />,
  <path d="M4 31L30 5" strokeDasharray="1 3" />,
  <path d="M4 31L31 4" />,
  <g><path d="M8 27L28 8" /><path d="M7 29l2-6 4 4z M29 6l-2 6-4-4z" fill="#000" /></g>,
  <g><path d="M8 27L28 8" /><path d="M30 6l-2 6-4-4z" fill="#000" /></g>,
  <path d="M4 17h29" strokeWidth="2.500" />,
  <g><path d="M5 17h22" strokeWidth="1.300" /><path d="M26 15l5 2-5 2z" fill="#000" /></g>,
  <g><path d="M4 17h24" strokeDasharray="8 2" /><path d="M27 15l5 2-5 2z" fill="#000" /></g>,
  <path d="M4 17h28" strokeDasharray="8 2" />,
  <g><path d="M5 17h23" strokeWidth="1.300" /><path d="M27 15l5 2-5 2z M16 15h4v4h-4z" fill="#000" /></g>,
];

const closedSections = [
  "Divers",
  "Avancé",
  "Essentiel",
  "Flèches",
  "Diagramme de flux",
  "Relation entre les éléments",
  "UML",
];

function SideMarker() {
  return <svg viewBox="0 0 5 8" className="mr-[7px] h-2 w-[5px]" fill="#8e8e8e"><path d="M0 0l5 4-5 4z" /></svg>;
}

function ShapeSidebar() {
  return (
    <aside className="flex w-[213px] shrink-0 flex-col border-r border-[#dadce0] text-[12px] font-medium text-black">
      <div className="flex h-[60px] items-center border-b border-[#dadce0] px-2 pb-[5px]">
        <label className="flex h-7 flex-1 items-center rounded border border-[#d4d6da] bg-white px-1.5">
          <input aria-label="Chercher des formes" placeholder="Chercher des formes" className="min-w-0 flex-1 text-[12px] font-normal outline-none placeholder:text-[#757575]" />
          <Search className="h-3 w-3 text-[#777]" strokeWidth={2.500} />
        </label>
      </div>
      <div className="flex h-[35px] items-center border-b border-[#e2e4e7] pr-2 pl-2">
        <SideMarker />
        <span className="flex-1">Bloc-notes</span>
        <span className="mr-[9px] flex h-3.5 w-3.5 items-center justify-center rounded-full border border-[#777] text-[10px] text-[#777]">?</span>
        <svg viewBox="0 0 8 8" className="mr-2.5 h-2 w-2" stroke="#777" strokeWidth="1.300"><path d="M0 4h8M4 0v8" /></svg>
        <Pencil className="mr-2 h-3 w-3 text-[#777]" />
        <X className="h-3 w-3 text-[#777]" />
      </div>
      <div className="flex h-[35px] items-center border-b border-[#e2e4e7] pl-1.5">
        <Caret className="mr-1.5 h-1 w-2 text-[#8e8e8e]" />
        Général
      </div>
      <div className="grid w-[190px] grid-cols-5 border-[#dadce0] pt-[7px] pb-1.5 pl-2.5">
        {paletteShapes.map((shape, index) => (
          <svg key={index} viewBox="0 0 36 34" className="h-[34px] w-9" fill="none" stroke="#111" strokeWidth="1.100">{shape}</svg>
        ))}
      </div>
      <div className="border-t border-[#dadce0]">
        {closedSections.map((name) => (
          <div key={name} className="flex h-[35px] items-center border-b border-[#dfe1e4] pt-0.5 pl-2">
            <SideMarker />
            {name}
          </div>
        ))}
      </div>
      <button type="button" className="mx-auto mt-3.5 flex h-7 w-[115px] items-center justify-center gap-1.5 rounded-sm border border-[#c9d3e6] bg-[#4a8bf5] font-['Liberation_Sans',sans-serif] text-[14px] font-normal text-white">
        <svg viewBox="0 0 9 9" className="h-[9px] w-[9px]" stroke="#fff" strokeWidth="1.800"><path d="M0 4.500h9M4.500 0v9" /></svg>
        Plus d'icones
      </button>
    </aside>
  );
}

type EntityRow = { text: string; bold?: boolean; humanist?: boolean; size?: string };
type Entity = { name: string; place: string; humanist?: boolean; rows: EntityRow[] };

const entities: Entity[] = [
  { name: "Membre", place: "top-[152px] left-[108px]", rows: [{ text: "id_membre" }, { text: "prenom" }, { text: "nom" }] },
  {
    name: "historique",
    place: "top-[212px] left-[488px]",
    humanist: true,
    rows: [{ text: "N_historique", humanist: true }, { text: "id_Nembr#" }, { text: "N_avent#" }, { text: "complète" }],
  },
  { name: "Aventure", place: "top-[132px] left-[838px]", rows: [{ text: "N_aventure" }, { text: "Nom" }, { text: "Date" }] },
  { name: "reptile", place: "top-[572px] left-[218px]", humanist: true, rows: [{ text: "N_lmat[PK]", bold: true }, { text: "prix [int 11]" }] },
  {
    name: "vivariums",
    place: "top-[572px] left-[548px]",
    humanist: true,
    rows: [
      { text: "N_vivariums[PK]", bold: true, humanist: true },
      { text: "Note [INT11]", size: "h-[28px]" },
      { text: "capacité [int 11]", size: "h-[26px]" },
      { text: "N_reptile[int11]", bold: true, size: "h-[26px]" },
    ],
  },
];

const cardinalities = [
  { text: "1", place: "top-[188px] left-[255px]" },
  { text: "n", place: "top-[249px] left-[470px]" },
  { text: "1", place: "top-[167px] left-[825px]" },
  { text: "n", place: "top-[267px] left-[645px]" },
  { text: "1", place: "top-[617px] left-[365px]" },
  { text: "*", place: "top-[627px] left-[537px]" },
];

function Canvas() {
  return (
    <main className="flex min-w-0 flex-1 flex-col bg-[#fbfbfb]">
      <div className="relative h-[931px] w-[1188px] border-r border-[#dcdcdc] bg-white bg-[linear-gradient(#dfdfdf_1px,transparent_1px),linear-gradient(90deg,#dfdfdf_1px,transparent_1px),linear-gradient(#f6f6f6_1px,transparent_1px),linear-gradient(90deg,#f6f6f6_1px,transparent_1px)] [background-size:40px_40px,40px_40px,10px_10px,10px_10px] [background-position:0_32px,38px_0,0_2px,8px_0] font-['Liberation_Sans',sans-serif] text-[12px] leading-[15px] text-black">
        <svg viewBox="0 0 1187 931" className="absolute inset-0 h-[931px] w-[1187px]" fill="none" stroke="#000">
          <path d="M358.500 0v931M0 201.500h1187" stroke="#bdbdbd" strokeDasharray="3 3" />
          <path d="M249 197.500L485 286M838 182.500L632 309M359 642.500L546 647" />
          <path d="M489 287.500l-9-.5 2.500-3.500L481 279z M629 311l4-8 1.500 4 4.500.5z M548 647l-8 4 2-4-2-4z" fill="#000" />
        </svg>
        <h2 className="absolute top-[49px] left-[128px] text-[19px] leading-6 font-bold underline">Exercice 5:</h2>
        <h2 className="absolute top-[472px] left-[78px] text-[19px] leading-6 font-bold underline">Exercice 6:</h2>
        {entities.map((entity) => (
          <section key={entity.name} className={`absolute w-[141px] border border-black ${entity.place}`}>
            <h3 className={entity.humanist ? "flex h-[30px] items-center justify-center border-b border-black bg-white font-['Open_Sans',sans-serif]" : "flex h-[30px] items-center justify-center border-b border-black bg-white pb-1"}>
              <svg viewBox="0 0 9 9" className="absolute top-1 left-1 h-[9px] w-[9px]"><path d="M.5.5h8v8h-8z" fill="#dfe2ea" stroke="#8f97aa" /><path d="M2 4.500h5" stroke="#222" /></svg>
              {entity.name}
            </h3>
            {entity.rows.map((row) => (
              <p
                key={row.text}
                className={`flex items-center pb-0.5 pl-[5px] whitespace-nowrap ${row.size ?? "h-[30px]"} ${row.bold ? "font-bold" : ""} ${row.humanist ? "font-['Open_Sans',sans-serif]" : ""}`}
              >
                {row.text}
              </p>
            ))}
          </section>
        ))}
        {cardinalities.map((mark) => (
          <span key={mark.place} className={`absolute ${mark.place}`}>{mark.text}</span>
        ))}
        <span className="absolute top-[934px] left-[615px] h-1 w-[464px] rounded-full bg-[#dedede]" />
        <span className="absolute top-[535px] left-[1461px] h-[157px] w-[3px] rounded-full bg-[#e0e0e0]" />
      </div>
      <div className="mt-[9px] flex h-[37px] items-stretch border-t border-[#dadce0] bg-[#f1f3f4] text-[12px] text-[#666]">
        <button type="button" aria-label="Pages" className="flex w-[31px] flex-col items-center justify-center gap-0.5">
          <span className="h-1 w-1 rounded-full bg-[#666]" />
          <span className="h-1 w-1 rounded-full bg-[#666]" />
          <span className="h-1 w-1 rounded-full bg-[#666]" />
        </button>
        <button type="button" className="flex w-[73px] items-center justify-center gap-2 border-x border-[#dadce0] bg-white text-[11px]">
          Page-1
          <ChevronUp className="h-2.5 w-2.5" strokeWidth={3} />
        </button>
        <button type="button" aria-label="Ajouter une page" className="ml-2">
          <svg viewBox="0 0 14 14" className="h-3.5 w-3.5" stroke="#666" strokeWidth="1.800"><path d="M0 7h14M7 0v14" /></svg>
        </button>
      </div>
    </main>
  );
}

function Check({ label, checked = false }: { label: string; checked?: boolean }) {
  return (
    <label className="flex items-center gap-1.5">
      <input type="checkbox" defaultChecked={checked} className="h-[13px] w-[13px] accent-[#0075ff]" />
      {label}
    </label>
  );
}

function FormatPanel() {
  return (
    <aside className="w-[240px] shrink-0 border-l border-[#dadce0] text-[11px] text-[#616161]">
      <div className="flex h-[34px] items-stretch text-[13px] font-bold">
        <button type="button" className="w-[106px]">Diagramme</button>
        <button type="button" className="flex-1 border-b border-l border-[#d4d6da] bg-[#e4e4e4]">Style</button>
        <button type="button" aria-label="Fermer" className="flex w-[27px] items-center justify-center border-b border-l border-[#d4d6da] bg-[#e4e4e4]"><X className="h-3 w-3 text-[#a9bccf]" strokeWidth={3} /></button>
      </div>
      <section className="h-[166px] border-b border-[#dadce0] pt-[15px] pr-[15px] pl-[13px]">
        <h3 className="text-[12px] leading-[18px] font-bold">Vue</h3>
        <div className="mt-1.5 flex h-[22px] items-center">
          <span className="flex-1"><Check label="Grille" checked /></span>
          <input aria-label="Taille de la grille" defaultValue="10 pt" className="h-5 w-12 rounded-sm border border-[#dadce0] bg-white px-0.5 text-right font-['Liberation_Sans',sans-serif] text-[12px] text-black" />
          <span className="ml-px flex h-5 w-3 flex-col items-center justify-center gap-1 rounded-sm border border-[#d4d6da] bg-[#f0f0f0]">
            <Caret className="h-[5px] w-2 rotate-180 text-[#888]" />
            <Caret className="h-[5px] w-2 text-[#888]" />
          </span>
          <button type="button" aria-label="Couleur de la grille" className="ml-1 flex h-[22px] w-[46px] items-center gap-[3px] rounded-sm border border-[#dadce0] bg-[#efefef] pl-[3px]">
            <span className="h-3.5 w-6 border border-black bg-[#d0d0d0]" />
            <Pipette className="h-3 w-3" />
          </button>
        </div>
        <div className="mt-0.5 flex h-5 items-center"><Check label="Aperçu de la page" checked /></div>
        <div className="mt-1 flex h-[22px] items-center pl-[19px]">
          <span className="flex-1">Arrière-plan</span>
          <button type="button" className="h-[22px] w-[110px] rounded-sm border border-[#dadce0] bg-[#efefef] font-['Liberation_Sans',sans-serif] text-[12px] text-black">Modifier...</button>
        </div>
        <div className="mt-0.5 flex h-6 items-center"><Check label="Couleur d'arrière-plan" /></div>
        <div className="flex h-6 items-center">
          <span className="w-[104px]"><Check label="Ombre" /></span>
          <Check label="Croquis" />
        </div>
      </section>
      <section className="h-[139px] border-b border-[#dadce0] pt-3 pl-[13px]">
        <h3 className="text-[12px] leading-[18px] font-bold">Options</h3>
        <div className="mt-[5px]">
          {["Flèches de connexion", "Points de connexion", "Guides", "Enregistrement auto"].map((name) => (
            <div key={name} className="flex h-6 items-center"><Check label={name} checked /></div>
          ))}
        </div>
      </section>
      <section className="h-[93px] border-b border-[#dadce0] pt-3 pl-[13px]">
        <h3 className="text-[12px] leading-[18px] font-bold">Taille du papier</h3>
        <select aria-label="Taille du papier" className="mt-1 h-[22px] w-[206px] rounded-sm border border-[#dadce0] bg-[#efefef] pl-0.5 font-['Liberation_Sans',sans-serif] text-[12px] text-black">
          <option>A4 (210 mm x 297 mm)</option>
        </select>
        <div className="mt-1 flex h-5 items-center gap-2.5 pl-[9px]">
          <label className="flex items-center gap-1.5"><input type="radio" name="orientation" defaultChecked className="h-[13px] w-[13px] accent-[#0075ff]" />Portrait</label>
          <label className="flex items-center gap-1.5"><input type="radio" name="orientation" className="h-[13px] w-[13px]" />Paysage</label>
        </div>
      </section>
      <section className="flex flex-col gap-0.5 border-b border-[#dadce0] pt-3 pr-4 pb-2.5 pl-[13px] font-['Liberation_Sans',sans-serif] text-[12px] text-black">
        <button type="button" className="h-5 rounded-sm border border-[#dadce0] bg-[#efefef] whitespace-nowrap">Modifier les paramètres...</button>
        <button type="button" className="h-5 rounded-sm border border-[#dadce0] bg-[#efefef] whitespace-nowrap">Effacer la mise en forme par défaut</button>
      </section>
    </aside>
  );
}

/* ------------------------------------------------------------------ */

export default function App() {
  return (
    <div className="flex h-screen w-full bg-white font-['Open_Sans',sans-serif]">
      <div className="flex min-w-0 flex-1 flex-col bg-black pt-[311px]">
        <div className="flex min-h-0 flex-1 flex-col bg-[linear-gradient(100deg,#f3f3cc_0%,#f2f0d6_18%,#ece4ec_36%,#efe6e3_50%,#e1e9ec_68%,#e1e5ec_100%)]">
          <TitleBar />
          <Ribbon />
          <ProtectedBar />
          <div className="flex min-h-0 flex-1">
            <NavigationPane />
            <DocumentPages />
          </div>
          <StatusBar />
        </div>
        <TaskBar />
      </div>
      <div className="flex min-w-0 flex-1 flex-col">
        <div className="flex flex-col bg-[#f1f3f4]">
          <DrawHeader />
          <DrawToolbar />
          <div className="flex">
            <ShapeSidebar />
            <Canvas />
            <FormatPanel />
          </div>
        </div>
      </div>
    </div>
  );
}
